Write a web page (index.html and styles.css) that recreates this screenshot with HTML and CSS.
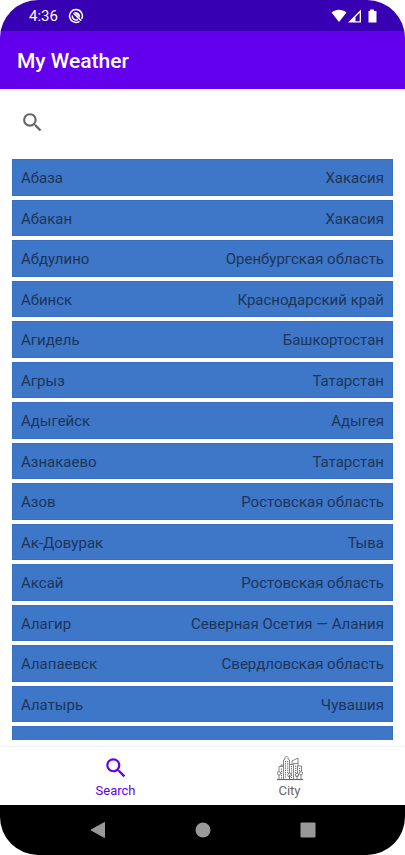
FILE: index.html
```html
<!DOCTYPE html>
<html lang="ru">
<head>
<meta charset="utf-8">
<meta name="viewport" content="width=device-width, initial-scale=1">
<title>My Weather</title>
<link rel="stylesheet" href="styles.css">
</head>
<body>
<div class="phone">
  <div class="status">
    <span class="clock">4:36</span>
    <svg class="status-app" viewBox="0 0 16 16" width="16" height="16" fill="none" stroke="#fff">
      <path d="M11.500 13.300A6.400 6.400 0 1 1 13.700 10.800" stroke-width="1.500"/>
      <path d="M4.800 5.200A4.200 4.200 0 0 1 11.600 9.800L6.200 4.600z" fill="#fff" stroke="none"/>
      <path d="M5.500 5.200 13.200 12.600" stroke-width="1.500"/>
      <path d="M9.800 11.500A3.800 3.800 0 0 1 4.300 7.500" stroke-width="1.500"/>
    </svg>
    <svg class="status-icons" viewBox="0 0 46 16" width="46" height="16">
      <path d="M.5 4.600C5 .8 11 .8 15.500 4.600L8 14z" fill="#fff"/>
      <path d="M17 14.500 30 1.500v13z" fill="#fff"/>
      <path d="M24.500 9 28.700 4.800v8.400h-4.200z" fill="#3700b3"/>
      <path d="M39 1.500h4v1.500h2.500v11.500h-8V3H39z" fill="#fff"/>
    </svg>
  </div>
  <header class="appbar"><h1>My Weather</h1></header>
  <main class="content">
    <div class="searchbar">
      <button class="search-button" type="button" aria-label="Search">
        <svg viewBox="0 0 24 24" width="25" height="25" fill="currentColor"><path d="M15.500 14h-.79l-.28-.27A6.470 6.470 0 0 0 16 9.500 6.500 6.500 0 1 0 9.500 16c1.610 0 3.090-.59 4.230-1.570l.27.28v.79l5 4.990L20.490 19zM9.500 14a4.500 4.500 0 1 1 0-9 4.500 4.500 0 0 1 0 9z"/></svg>
      </button>
    </div>
    <div class="viewport">
      <ul class="cities">
        <li><span>Абаза</span><span>Хакасия</span></li>
        <li><span>Абакан</span><span>Хакасия</span></li>
        <li><span>Абдулино</span><span>Оренбургская область</span></li>
        <li><span>Абинск</span><span>Краснодарский край</span></li>
        <li><span>Агидель</span><span>Башкортостан</span></li>
        <li><span>Агрыз</span><span>Татарстан</span></li>
        <li><span>Адыгейск</span><span>Адыгея</span></li>
        <li><span>Азнакаево</span><span>Татарстан</span></li>
        <li><span>Азов</span><span>Ростовская область</span></li>
        <li><span>Ак-Довурак</span><span>Тыва</span></li>
        <li><span>Аксай</span><span>Ростовская область</span></li>
        <li><span>Алагир</span><span>Северная Осетия — Алания</span></li>
        <li><span>Алапаевск</span><span>Свердловская область</span></li>
        <li><span>Алатырь</span><span>Чувашия</span></li>
        <li></li>
      </ul>
    </div>
  </main>
  <nav class="tabs">
    <a class="tab active" href="#search">
      <svg viewBox="0 0 24 24" width="26" height="26" fill="currentColor"><path d="M15.500 14h-.79l-.28-.27A6.470 6.470 0 0 0 16 9.500 6.500 6.500 0 1 0 9.500 16c1.610 0 3.090-.59 4.230-1.570l.27.28v.79l5 4.990L20.490 19zM9.500 14a4.500 4.500 0 1 1 0-9 4.500 4.500 0 0 1 0 9z"/></svg>
      <span>Search</span>
    </a>
    <a class="tab" href="#city">
      <svg viewBox="0 0 26 26" width="26" height="26" fill="none" stroke="currentColor" stroke-width=".8">
        <path d="M0 24.500h26" stroke-width="1.200"/>
        <path d="M2 16.500v-5h4.500M4 11.500v-1.500h2.500M6.500 24V5l1.500-1V2.500L9.500 1 11 2.500V4l1.500 1v19M12.500 9.500h3.500M15 9V6l6-3v5.500M16.500 8.500H21V11M16.500 8.500V24M21 11h3.500v5.500M20.500 11v7M2 20v4.500M24 20v4.500"/>
        <circle cx="2" cy="18.300" r="1.700"/>
        <circle cx="24" cy="18.300" r="1.700"/>
        <circle cx="12.500" cy="20" r="1.800" fill="#fff"/>
        <circle cx="20" cy="20" r="1.700" fill="#fff"/>
        <path d="M12.500 20v4.500M20 20v4.500"/>
        <path d="M8.500 6v17M10.700 6v12M14.500 11v12M18.700 10.500v8M22.500 13v4M4.500 13.500v10" stroke-width="1.100" stroke-dasharray="1.200 1"/>
      </svg>
      <span>City</span>
    </a>
  </nav>
  <div class="system">
    <button type="button" aria-label="Back"><svg viewBox="0 0 18 18" width="18" height="18"><path d="M15.500 1.500v15L2 9z" fill="#999" stroke="#999" stroke-linejoin="round"/></svg></button>
    <button type="button" aria-label="Home"><svg viewBox="0 0 18 18" width="18" height="18"><circle cx="9" cy="9" r="7.500" fill="#999"/></svg></button>
    <button type="button" aria-label="Overview"><svg viewBox="0 0 18 18" width="18" height="18"><rect x="1.500" y="1.500" width="15" height="15" rx="1" fill="#999"/></svg></button>
  </div>
</div>
</body>
</html>
```
FILE: styles.css
```css
* {
  box-sizing: border-box;
}

body {
  margin: 0;
  background: #fff;
  font-family: Roboto, "Noto Sans", sans-serif;
}

button {
  display: flex;
  padding: 0;
  border: 0;
  background: none;
  color: inherit;
}

.phone {
  display: flex;
  flex-direction: column;
  height: 100vh;
  overflow: hidden;
  border-radius: 38px;
  background: #fff;
}

.status {
  display: flex;
  align-items: center;
  flex: none;
  height: 31px;
  padding: 1px 28px 0 29px;
  background: #3700b3;
  color: #fff;
}

.clock {
  font-size: 15px;
  line-height: 20px;
}

.status-app {
  margin-left: 10px;
}

.status-icons {
  margin-left: auto;
}

.appbar {
  display: flex;
  align-items: center;
  flex: none;
  height: 58px;
  padding: 2px 17px 0;
  background: #6200ee;
  color: #fff;
}

.appbar h1 {
  margin: 0;
  font-size: 21px;
  line-height: 28px;
  font-weight: 500;
}

.content {
  display: flex;
  flex: 1;
  flex-direction: column;
  min-height: 0;
  padding: 0 12px 7px;
  background: linear-gradient(#f5f5f5, #fff 4px);
}

.searchbar {
  display: flex;
  align-items: center;
  flex: none;
  height: 70px;
  padding: 0 8px 4px;
  color: #666;
}

.viewport {
  flex: 1;
  min-height: 0;
  overflow: hidden;
}

.cities {
  display: flex;
  flex-direction: column;
  gap: 4px;
  margin: 0;
  padding: 0;
  list-style: none;
}

.cities li {
  display: flex;
  align-items: center;
  justify-content: space-between;
  height: 37px;
  padding: 1px 8px 0;
  border: 1px solid #3870c4;
  background: #3e76c8;
  color: #1c3559;
  font-size: 15px;
  line-height: 20px;
}

.cities li:nth-child(even) {
  height: 36px;
}

.tabs {
  display: flex;
  justify-content: center;
  flex: none;
  height: 58px;
  background: #fff;
  box-shadow: 0 -1px 2px #eee;
}

.tab {
  display: flex;
  flex-direction: column;
  align-items: center;
  flex: 0 1 174px;
  padding-top: 8px;
  color: #666;
  font-size: 13px;
  line-height: 20px;
  text-decoration: none;
}

.tab.active {
  color: #6200ee;
}

.system {
  display: flex;
  align-items: center;
  justify-content: center;
  gap: 87px;
  flex: none;
  height: 50px;
  background: #000;
}
```
